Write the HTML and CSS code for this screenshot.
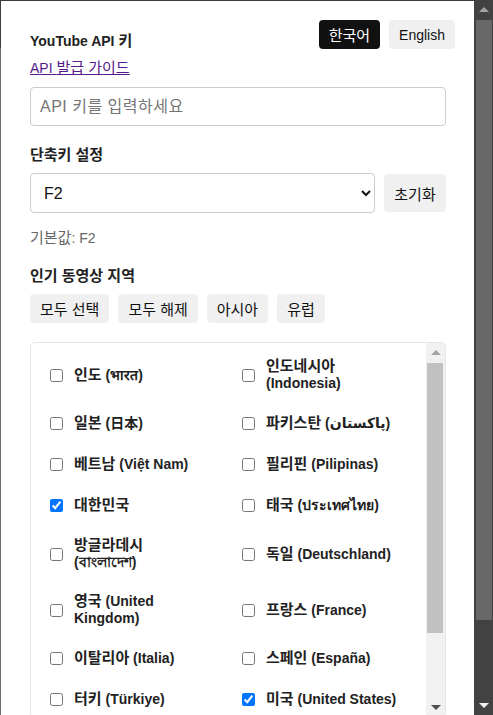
FILE: index.html
```html
<!DOCTYPE html>
<html lang="ko">
<head>
<meta charset="utf-8">
<title>YouTube 설정</title>
<link rel="stylesheet" href="styles.css">
</head>
<body>
<div class="app">
  <div class="page">
    <div class="popup">
      <div class="lang-switch">
        <button class="lang-btn lang-active ko">한국어</button>
        <button class="lang-btn">English</button>
      </div>

      <section class="section first">
        <div class="label">YouTube API <span class="ko">키</span></div>
        <a class="guide-link" href="#">API <span class="ko">발급 가이드</span></a>
        <input class="text-input" type="text" placeholder="API 키를 입력하세요">
      </section>

      <section class="section">
        <div class="label ko">단축키 설정</div>
        <div class="shortcut-row">
          <select class="select">
            <option>F2</option>
            <option>F3</option>
            <option>F4</option>
          </select>
          <button class="btn reset-btn ko">초기화</button>
        </div>
        <div class="hint"><span class="ko">기본값</span>: F2</div>
      </section>

      <section class="section">
        <div class="label ko">인기 동영상 지역</div>
        <div class="btn-row">
          <button class="btn ko">모두 선택</button>
          <button class="btn ko">모두 해제</button>
          <button class="btn ko">아시아</button>
          <button class="btn ko">유럽</button>
        </div>
        <div class="region-box">
          <div class="region-grid">
            <label class="region"><input type="checkbox"><span><span class="ko">인도</span> (भारत)</span></label>
            <label class="region"><input type="checkbox"><span><span class="ko">인도네시아</span> (Indonesia)</span></label>
            <label class="region"><input type="checkbox"><span><span class="ko">일본</span> (日本)</span></label>
            <label class="region"><input type="checkbox"><span><span class="ko">파키스탄</span> (پاکستان)</span></label>
            <label class="region"><input type="checkbox"><span><span class="ko">베트남</span> (Việt Nam)</span></label>
            <label class="region"><input type="checkbox"><span><span class="ko">필리핀</span> (Pilipinas)</span></label>
            <label class="region"><input type="checkbox" checked><span><span class="ko">대한민국</span></span></label>
            <label class="region"><input type="checkbox"><span><span class="ko">태국</span> (ประเทศไทย)</span></label>
            <label class="region"><input type="checkbox"><span><span class="ko">방글라데시</span><br>(বাংলাদেশ)</span></label>
            <label class="region"><input type="checkbox"><span><span class="ko">독일</span> (Deutschland)</span></label>
            <label class="region"><input type="checkbox"><span><span class="ko">영국</span> (United Kingdom)</span></label>
            <label class="region"><input type="checkbox"><span><span class="ko">프랑스</span> (France)</span></label>
            <label class="region"><input type="checkbox"><span><span class="ko">이탈리아</span> (Italia)</span></label>
            <label class="region"><input type="checkbox"><span><span class="ko">스페인</span> (España)</span></label>
            <label class="region"><input type="checkbox"><span><span class="ko">터키</span> (Türkiye)</span></label>
            <label class="region"><input type="checkbox" checked><span><span class="ko">미국</span> (United States)</span></label>
            <label class="region"><input type="checkbox"><span><span class="ko">브라질</span> (Brasil)</span></label>
            <label class="region"><input type="checkbox"><span><span class="ko">멕시코</span> (México)</span></label>
            <label class="region"><input type="checkbox"><span><span class="ko">러시아</span> (Россия)</span></label>
            <label class="region"><input type="checkbox"><span><span class="ko">캐나다</span> (Canada)</span></label>
          </div>
          <div class="scrollbar box-scroll">
            <div class="sb-btn"><span class="arrow-up"></span></div>
            <div class="sb-track"><div class="sb-thumb"></div></div>
            <div class="sb-btn"><span class="arrow-down"></span></div>
          </div>
        </div>
      </section>
    </div>
  </div>
  <div class="scrollbar page-scroll">
    <div class="sb-btn"><span class="arrow-up"></span></div>
    <div class="sb-track"><div class="sb-thumb"></div></div>
    <div class="sb-btn"><span class="arrow-down"></span></div>
  </div>
</div>
</body>
</html>
```

FILE: styles.css
```css
body {
  margin: 0;
  background: #ffffff;
  font-family: "Liberation Sans", "Noto Sans CJK KR", "DejaVu Sans", sans-serif;
  font-size: 14px;
  color: #222222;
}

.ko {
  font-size: 15px;
}

.label .ko,
.guide-link .ko,
.hint .ko,
.region .ko {
  line-height: 1;
}

.app {
  display: flex;
  height: 100vh;
  overflow: hidden;
}

.page {
  flex: 1;
  min-width: 0;
  padding: 1px 0 0 1px;
  background: linear-gradient(to bottom, #3c3c3c 0, #3c3c3c 48px, #6b6b6b 48px);
  overflow: hidden;
}

.popup {
  position: relative;
  min-height: 100%;
  padding: 32px 28px 94px 29px;
  background: #ffffff;
}

/* fake scrollbars */
.scrollbar {
  flex: none;
  width: 19px;
  display: flex;
  flex-direction: column;
}

.sb-btn {
  flex: none;
  height: 19px;
  display: flex;
  align-items: center;
  justify-content: center;
}

.sb-track {
  flex: 1;
}

.arrow-up,
.arrow-down {
  width: 0;
  height: 0;
  border-left: 5px solid transparent;
  border-right: 5px solid transparent;
}

.arrow-up {
  border-bottom: 5px solid currentColor;
}

.arrow-down {
  border-top: 5px solid currentColor;
}

.page-scroll {
  background: #424242;
}

.page-scroll .sb-btn:first-child {
  color: #a3a3a3;
}

.page-scroll .sb-btn:last-child {
  color: #f2f2f2;
}

.page-scroll .sb-thumb {
  height: 600px;
  margin: 1px 1px 0 2px;
  background: #686868;
}

.box-scroll {
  background: #f1f1f1;
}

.box-scroll .sb-btn:first-child {
  color: #a3a3a3;
}

.box-scroll .sb-btn:last-child {
  color: #505050;
}

.box-scroll .sb-thumb {
  height: 270px;
  margin: 1px 2px 0 1px;
  background: #c1c1c1;
}

/* content */
.lang-switch {
  position: absolute;
  top: 19px;
  right: 19px;
  display: flex;
  gap: 9px;
}

.lang-btn {
  height: 29px;
  padding: 0 10px;
  border: none;
  border-radius: 4px;
  background: #f0f0f0;
  color: #111111;
  font-family: inherit;
  font-size: 14px;
}

.lang-btn.ko {
  font-size: 15px;
}

.lang-active {
  background: #111111;
  color: #ffffff;
}

.section {
  margin-top: 20px;
}

.section.first {
  margin-top: 0;
}

.label {
  font-weight: bold;
  line-height: 17px;
  color: #222222;
}

.label.ko {
  font-size: 15px;
}

.guide-link {
  display: inline-block;
  margin-top: 10px;
  line-height: 17px;
  color: #551a8b;
  text-decoration: underline;
}

.text-input {
  display: block;
  box-sizing: border-box;
  width: 100%;
  height: 39px;
  margin-top: 10px;
  padding: 0 9px;
  border: 1px solid #cccccc;
  border-radius: 4px;
  font-family: inherit;
  font-size: 16px;
  color: #222222;
  outline: none;
}

.text-input::placeholder {
  color: #757575;
  letter-spacing: 0.5px;
}

.shortcut-row {
  display: flex;
  align-items: center;
  gap: 9px;
  margin-top: 10px;
}

.select {
  flex: 1;
  min-width: 0;
  box-sizing: border-box;
  height: 40px;
  padding: 0 8px 0 9px;
  border: 1px solid #cccccc;
  border-radius: 4px;
  background: #ffffff;
  font-family: inherit;
  font-size: 16px;
  color: #111111;
}

.btn {
  height: 29px;
  padding: 0 10px;
  border: none;
  border-radius: 4px;
  background: #f0f0f0;
  color: #111111;
  font-family: inherit;
  font-size: 14px;
}

.btn.ko {
  font-size: 15px;
}

.reset-btn {
  flex: none;
  width: 62px;
  height: 38px;
  padding: 0;
}

.hint {
  margin-top: 17px;
  line-height: 17px;
  color: #666666;
}

.btn-row {
  display: flex;
  gap: 9px;
  margin-top: 10px;
}

.region-box {
  box-sizing: border-box;
  display: flex;
  height: 376px;
  margin-top: 19px;
  border: 1px solid #e6e6e6;
  border-radius: 5px;
  overflow: hidden;
  background: #ffffff;
}

.region-grid {
  flex: 1;
  align-self: flex-start;
  display: grid;
  grid-template-columns: 164px 164px;
  column-gap: 28px;
  row-gap: 22px;
  padding: 15px;
}

.region {
  display: flex;
  align-items: center;
  gap: 8px;
  line-height: 17px;
  font-weight: bold;
  color: #222222;
}

.region input {
  flex: none;
  width: 13px;
  height: 13px;
  margin: 3px 3px 3px 4px;
}
```
